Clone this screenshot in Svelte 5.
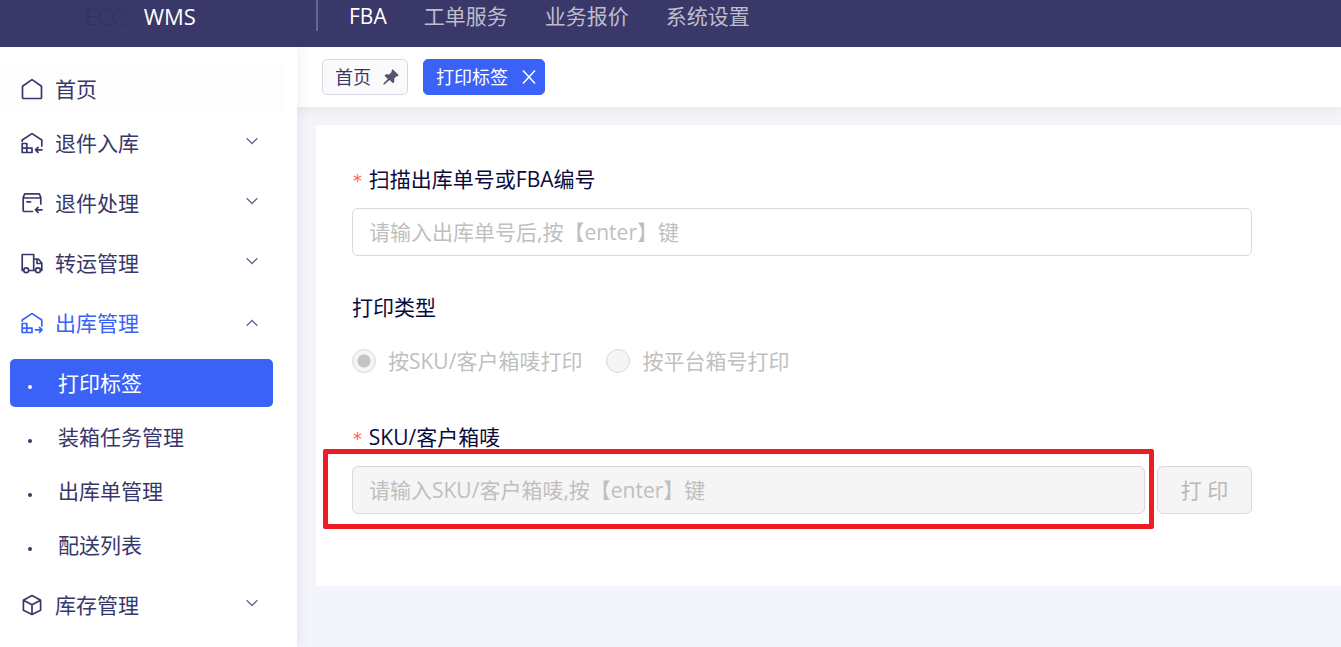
<script lang="ts">
  interface MenuItem {
    id: string;
    label: string;
    children?: string[];
  }

  const navLinks = ['FBA', '工单服务', '业务报价', '系统设置'];

  const menu: MenuItem[] = [
    { id: 'home', label: '首页' },
    { id: 'return-in', label: '退件入库', children: [] },
    { id: 'return-handle', label: '退件处理', children: [] },
    { id: 'transfer', label: '转运管理', children: [] },
    {
      id: 'outbound',
      label: '出库管理',
      children: ['打印标签', '装箱任务管理', '出库单管理', '配送列表']
    },
    { id: 'stock', label: '库存管理', children: [] }
  ];

  let activeNav = $state('FBA');
  let openMenu = $state('outbound');
  let activePage = $state('打印标签');
  let orderNo = $state('');
  let printType = $state('sku');
  let sku = $state('');

  // Fields after the first one unlock once an order has been scanned
  let scanned = $state(false);

  function toggleMenu(id: string) {
    openMenu = openMenu === id ? '' : id;
  }

  function handleScan(event: KeyboardEvent) {
    if (event.key === 'Enter') {
      scanned = orderNo.trim() !== '';
    }
  }
</script>

{#snippet menuIcon(id: string)}
  <svg class="menu-icon" viewBox="0 0 22 22" fill="none" stroke="currentColor" stroke-width="1.7" stroke-linejoin="round" stroke-linecap="round" aria-hidden="true">
    {#if id === 'home'}
      <path d="M1.5 8.3L11 1.6l9.5 6.7v11.2a1 1 0 0 1-1 1h-17a1 1 0 0 1-1-1z" />
    {:else if id === 'return-in' || id === 'outbound'}
      <path d="M1.2 9.2V8L11 1.6 20.8 8v6" />
      <path d="M1.2 11.5h4.6v4.6H1.2zM1.2 16.1h4.6v4.4H1.2zM5.8 16.1h5.2v4.4H5.8z" />
      {#if id === 'outbound'}
        <path d="M14.5 17.8h6.5M18.5 15.3l2.5 2.5-2.5 2.5" />
      {:else}
        <path d="M21 17.8h-6.5M17 15.3l-2.5 2.5 2.5 2.5" />
      {/if}
    {:else if id === 'return-handle'}
      <path d="M11.5 19.5H3.2a1 1 0 0 1-1-1V5.5l1.5-3.7h14.6l1.5 3.7v6.5M2.2 6h17.6M6 9.8h3.5" />
      <path d="M21 17.8h-6.5M17 15.3l-2.5 2.5 2.5 2.5" />
    {:else if id === 'transfer'}
      <path d="M2.3 18.5H1.2V2.5h11.5v16H8M12.7 7h4.6l3.5 4v7.5h-1M12.7 18.5h1.5M16 7.5v4h4.6" />
      <circle cx="5.2" cy="18.3" r="2.4" />
      <circle cx="17" cy="18.3" r="2.4" />
    {:else}
      <path d="M11 1.5l8.6 4.7v10L11 20.5l-8.6-4.3v-10zM2.4 6.2L11 10.8l8.6-4.6M11 10.8v9.7" />
    {/if}
  </svg>
{/snippet}

<div class="app">
  <header class="header">
    <div class="brand"><span class="brand-mark">ECC.</span><span>WMS</span></div>
    <nav class="top-nav">
      {#each navLinks as link}
        <a href="#top" class:active={activeNav === link} onclick={() => (activeNav = link)}>{link}</a>
      {/each}
    </nav>
  </header>

  <div class="body">
    <aside class="sidebar">
      {#each menu as item}
        {#if item.children}
          <div class="menu-group">
            <button type="button" class="menu-item" class:open={openMenu === item.id} aria-expanded={openMenu === item.id} onclick={() => toggleMenu(item.id)}>
              {@render menuIcon(item.id)}
              <span>{item.label}</span>
              <svg class="chevron" viewBox="0 0 14 8" fill="none" stroke="currentColor" stroke-width="1.6" aria-hidden="true">
                <path d="M0.8 0.8l6.200 6.200 6.200-6.200" />
              </svg>
            </button>
          </div>
          {#if openMenu === item.id && item.children.length}
            <ul class="submenu">
              {#each item.children as child}
                <li>
                  <a href="#page" class:active={activePage === child} onclick={() => (activePage = child)}>{child}</a>
                </li>
              {/each}
            </ul>
          {/if}
        {:else}
          <a href="#home" class="menu-item home">
            {@render menuIcon(item.id)}
            <span>{item.label}</span>
          </a>
        {/if}
      {/each}
    </aside>

    <main class="main">
      <div class="tabs">
        <button type="button" class="tab">
          <span>首页</span>
          <svg class="pin" viewBox="0 0 16 16" fill="currentColor" aria-hidden="true">
            <path d="M9.8 0.3L15.7 6.2l-1.3 1.2-0.9-0.2-2.300 2.400 0.100 3.300-1.400 1.400-3.300-3.300L1.400 15.400H0.400v-1l4.400-4.400L1.500 6.700l1.400-1.400 3.400 0.100L8.700 2.700l-0.200-1.100z" />
          </svg>
        </button>
        <button type="button" class="tab active">
          <span>打印标签</span>
          <svg class="close" viewBox="0 0 14 14" fill="none" stroke="currentColor" stroke-width="1.5" aria-hidden="true">
            <path d="M1 0.5l12 13M13 0.5l-12 13" />
          </svg>
        </button>
      </div>

      <section class="card">
        <form class="form" onsubmit={(e) => e.preventDefault()}>
          <div class="field">
            <label class="label required" for="order-no">扫描出库单号或FBA编号</label>
            <input id="order-no" class="input" type="text" placeholder="请输入出库单号后,按【enter】键" bind:value={orderNo} onkeydown={handleScan} />
          </div>

          <fieldset class="field" disabled={!scanned}>
            <legend class="label">打印类型</legend>
            <div class="radios">
              <label class="radio">
                <input type="radio" name="print-type" value="sku" bind:group={printType} />
                <span>按SKU/客户箱唛打印</span>
              </label>
              <label class="radio">
                <input type="radio" name="print-type" value="platform" bind:group={printType} />
                <span>按平台箱号打印</span>
              </label>
            </div>
          </fieldset>

          <div class="field">
            <label class="label required" for="sku">SKU/客户箱唛</label>
            <div class="row">
              <div class="highlight">
                <input id="sku" class="input" type="text" placeholder="请输入SKU/客户箱唛,按【enter】键" bind:value={sku} disabled={!scanned} />
              </div>
              <button type="submit" class="print" disabled={!scanned}>打 印</button>
            </div>
          </div>
        </form>
      </section>
    </main>
  </div>
</div>

<style>
  :global(body) {
    margin: 0;
  }

  .app {
    display: flex;
    flex-direction: column;
    min-height: 100vh;
    font-family: 'Open Sans', 'Noto Sans CJK SC', sans-serif;
    font-size: 21px;
    line-height: 32px;
    color: #38376a;
    background: #f4f5fa;
  }

  .app * {
    box-sizing: border-box;
  }

  button,
  input {
    font: inherit;
    color: inherit;
  }

  button {
    cursor: pointer;
  }

  a {
    color: inherit;
    text-decoration: none;
  }

  /* Header */
  .header {
    position: relative;
    z-index: 1;
    display: flex;
    align-items: flex-start;
    height: 47px;
    background: #393868;
    color: #fff;
  }

  .brand {
    display: flex;
    gap: 14px;
    width: 316px;
    padding-left: 85px;
    font-size: 22px;
  }

  .brand-mark {
    color: #2c3266;
    font-weight: 300;
  }

  .top-nav {
    display: flex;
    gap: 37px;
    padding-left: 31px;
    height: 31px;
    border-left: 2px solid #66658b;
  }

  .top-nav a {
    color: #bdbdce;
  }

  .top-nav a.active {
    color: #fff;
  }

  .body {
    display: flex;
    flex: 1;
  }

  /* Sidebar */
  .sidebar {
    position: relative;
    flex: none;
    width: 297px;
    padding-top: 18px;
    background: #fff;
    box-shadow: 2px 0 12px rgba(40, 50, 60, 0.08);
  }

  .menu-item {
    display: flex;
    align-items: center;
    gap: 12px;
    width: 100%;
    height: 48px;
    padding: 0 39px 0 21px;
    border: 0;
    background: none;
    text-align: left;
  }

  .menu-item.home {
    width: 284px;
    margin-bottom: 6px;
    background: #fdfdfd;
  }

  .menu-group {
    margin-bottom: 12px;
  }

  .menu-item.open {
    color: #3a62f7;
  }

  .menu-icon {
    width: 22px;
    height: 22px;
  }

  .chevron {
    width: 12px;
    height: 8px;
    margin-left: auto;
    margin-bottom: 4px;
    color: #69688f;
  }

  .menu-item.open .chevron {
    margin-bottom: 0;
    transform: rotate(180deg);
  }

  .submenu {
    display: flex;
    flex-direction: column;
    gap: 6px;
    margin: 0 24px 12px 10px;
    padding: 0;
    list-style: none;
  }

  .submenu a {
    display: flex;
    align-items: center;
    gap: 26px;
    height: 48px;
    padding-left: 18px;
    border-radius: 5px;
  }

  .submenu a::before {
    content: '';
    width: 4px;
    height: 4px;
    margin-top: 8px;
    border-radius: 50%;
    background: currentColor;
  }

  .submenu a.active {
    color: #fff;
    background: #3a62f7;
  }

  /* Tabs */
  .main {
    flex: 1;
    min-width: 0;
  }

  .tabs {
    display: flex;
    align-items: center;
    gap: 15px;
    height: 60px;
    padding-left: 25px;
    background: #fff;
    box-shadow: 0 2px 12px rgba(40, 50, 60, 0.08);
  }

  .tab {
    display: flex;
    align-items: center;
    gap: 12px;
    height: 36px;
    padding: 0 8px 0 12px;
    border: 1px solid #d7d6e2;
    border-radius: 5px;
    background: #fafafa;
    font-size: 18px;
    line-height: 24px;
  }

  .tab.active {
    gap: 14px;
    border-color: #3a62f7;
    background: #3a62f7;
    color: #fff;
  }

  .pin {
    width: 16px;
    height: 16px;
    color: #55546e;
  }

  .close {
    width: 14px;
    height: 14px;
  }

  /* Form */
  .card {
    margin: 18px 0 0 19px;
    padding: 38px 36px 72px;
    background: #fff;
  }

  .form {
    max-width: 900px;
  }

  .field {
    min-width: 0;
    margin: 0 0 35px;
    padding: 0;
    border: 0;
  }

  .field:last-child {
    margin-bottom: 0;
  }

  .label {
    display: flex;
    align-items: center;
    margin-bottom: 13px;
    padding: 0;
    color: #0a0a3c;
  }

  .label.required::before {
    content: '*';
    margin-right: 6px;
    padding-top: 4px;
    color: #ff5f57;
    font-family: 'DejaVu Sans Mono', monospace;
    font-size: 18px;
    line-height: 24px;
  }

  .input {
    display: block;
    width: 100%;
    height: 48px;
    padding: 0 16px;
    border: 1px solid #d9d9d9;
    border-radius: 6px;
    background: #fff;
  }

  .input::placeholder {
    color: #bfbfbf;
    opacity: 1;
  }

  .input:disabled {
    background: #f5f5f5;
  }

  .radios {
    display: flex;
    gap: 24px;
    padding: 9px 0 9px;
  }

  .radio {
    display: flex;
    align-items: center;
    gap: 12px;
    color: #bfbfbf;
  }

  .radio input {
    appearance: none;
    width: 24px;
    height: 24px;
    margin: 0;
    border: 1px solid #d9d9d9;
    border-radius: 50%;
    background: #f5f5f5;
  }

  .radio input:checked {
    background: radial-gradient(circle, #c4c4c4 6px, #f5f5f5 7px);
  }

  .row {
    display: flex;
    gap: 12px;
  }

  .highlight {
    position: relative;
    flex: 1;
  }

  .highlight::after {
    content: '';
    position: absolute;
    inset: -17px -9px -15px -29px;
    border: 5px solid #ee1c25;
    border-radius: 2px;
    pointer-events: none;
  }

  .print {
    width: 95px;
    height: 48px;
    padding: 0;
    border: 1px solid #d9d9d9;
    border-radius: 6px;
    background: #f5f5f5;
    color: #b8b8b8;
  }
</style>
